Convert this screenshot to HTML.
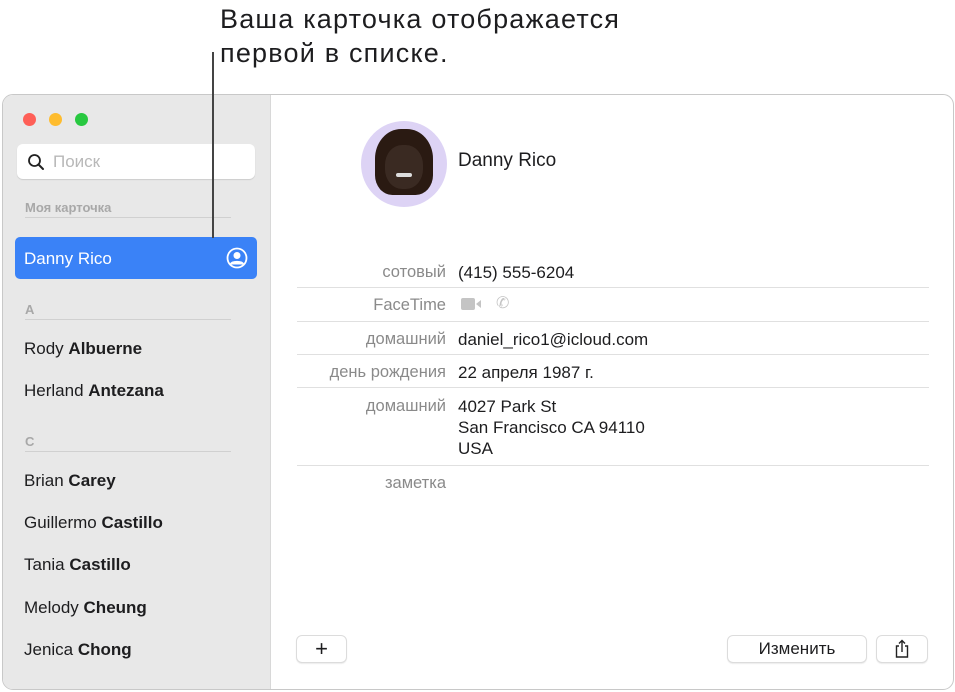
<!DOCTYPE html>
<html><head><meta charset="utf-8"><style>
*{margin:0;padding:0;box-sizing:border-box}
body{width:955px;height:692px;background:#fff;font-family:"Liberation Sans","Noto Sans CJK SC",sans-serif;position:relative;overflow:hidden;color:#1d1d1f}
.a{position:absolute}
.win{left:2px;top:94px;width:952px;height:596px;border:1.5px solid #c8c8c8;border-radius:11px;overflow:hidden;background:#fff}
.side{left:0;top:0;width:268px;height:100%;background:#e8e8e8;border-right:1px solid #d8d8d8}
.dot{width:13px;height:13px;border-radius:50%;top:18px}
.name{left:21px;font-size:17px;color:#1d1d1f}
.name b{font-weight:bold}
.hdr{left:22px;font-size:13px;color:#a8a8a8;font-weight:bold}
.hl{left:22px;width:206px;height:1px;background:#d0d0d0}
.lab{right:507px;font-size:16.5px;color:#8a8a8a;text-align:right;white-space:nowrap}
.val{left:455px;font-size:17px;color:#1d1d1f;line-height:21px}
.sep{left:294px;width:632px;height:1px;background:#e0e0e0}
.btn{background:#fff;border:1px solid #dcdcdc;border-radius:6px;box-shadow:0 1px 1px rgba(0,0,0,.08);top:540px;height:28px;display:flex;align-items:center;justify-content:center;font-size:16px}
</style></head><body>
<div class="a" style="left:220px;top:2px;font-size:27px;letter-spacing:1.2px;line-height:34px;color:#1d1d1f">Ваша карточка отображается<br>первой в списке.</div>
<div class="win a">
 <div class="side a">
  <div class="a dot" style="left:20px;background:#fe5f57"></div>
  <div class="a dot" style="left:46px;background:#febc2e"></div>
  <div class="a dot" style="left:72px;background:#28c840"></div>
  <div class="a" style="left:14px;top:49px;width:238px;height:35px;background:#fff;border-radius:6px;box-shadow:0 1px 1px rgba(0,0,0,.12)">
   <svg class="a" style="left:10px;top:9px" width="18" height="18" viewBox="0 0 18 18"><circle cx="7.5" cy="7.5" r="5.5" fill="none" stroke="#222" stroke-width="1.8"/><path d="M11.5 11.5L16 16" stroke="#222" stroke-width="2" stroke-linecap="round"/></svg>
   <div class="a" style="left:36px;top:8px;font-size:17px;color:#b8b8b8">Поиск</div>
  </div>
  <div class="a hdr" style="top:105px">Моя карточка</div>
  <div class="a hl" style="top:122px"></div>
  <div class="a" style="left:12px;top:142px;width:242px;height:42px;background:#3a82f7;border-radius:5px">
   <div class="a" style="left:9px;top:12px;font-size:17px;color:#fff">Danny Rico</div>
   <svg class="a" style="left:211px;top:10px" width="22" height="22" viewBox="0 0 22 22"><circle cx="11" cy="11" r="9.5" fill="none" stroke="#fff" stroke-width="1.8"/><circle cx="11" cy="8.5" r="3.5" fill="#fff"/><path d="M4.5 17.5C6 14 16 14 17.5 17.5" fill="#fff" stroke="#fff" stroke-width="2"/></svg>
  </div>
  <div class="a hdr" style="top:207px">A</div>
  <div class="a hl" style="top:224px"></div>
  <div class="a name" style="top:244px">Rody <b>Albuerne</b></div>
  <div class="a name" style="top:286px">Herland <b>Antezana</b></div>
  <div class="a hdr" style="top:339px">C</div>
  <div class="a hl" style="top:356px"></div>
  <div class="a name" style="top:376px">Brian <b>Carey</b></div>
  <div class="a name" style="top:418px">Guillermo <b>Castillo</b></div>
  <div class="a name" style="top:460px">Tania <b>Castillo</b></div>
  <div class="a name" style="top:503px">Melody <b>Cheung</b></div>
  <div class="a name" style="top:545px">Jenica <b>Chong</b></div>
 </div>
 <div class="a" style="left:358px;top:26px;width:86px;height:86px;border-radius:50%;background:#ddd3f5;overflow:hidden">
  <div class="a" style="left:14px;top:8px;width:58px;height:66px;border-radius:45% 45% 30% 30%;background:#2a1a12"></div>
  <div class="a" style="left:24px;top:24px;width:38px;height:44px;border-radius:45%;background:#3a2a22"></div>
  <div class="a" style="left:35px;top:52px;width:16px;height:4px;border-radius:3px;background:#ddd"></div>
 </div>
 <div class="a" style="left:455px;top:55px;font-size:19px">Danny Rico</div>
 <div class="a lab" style="top:168px">сотовый</div><div class="a val" style="top:167px">(415) 555-6204</div>
 <div class="a sep" style="top:192px"></div>
 <div class="a lab" style="top:201px">FaceTime</div>
 <svg class="a" style="left:457px;top:201px" width="24" height="16" viewBox="0 0 24 16"><rect x="1" y="2" width="14" height="12" rx="2" fill="#c4c4c4"/><path d="M16 8l5-4v8z" fill="#c4c4c4"/></svg>
 <div class="a" style="left:493px;top:198px;font-size:16px;color:#c4c4c4">✆</div>
 <div class="a sep" style="top:226px"></div>
 <div class="a lab" style="top:235px">домашний</div><div class="a val" style="top:234px">daniel_rico1@icloud.com</div>
 <div class="a sep" style="top:259px"></div>
 <div class="a lab" style="top:268px">день рождения</div><div class="a val" style="top:267px">22 апреля 1987 г.</div>
 <div class="a sep" style="top:292px"></div>
 <div class="a lab" style="top:302px">домашний</div><div class="a val" style="top:301px">4027 Park St<br>San Francisco CA 94110<br>USA</div>
 <div class="a sep" style="top:370px"></div>
 <div class="a lab" style="top:379px">заметка</div>
 <div class="a btn" style="left:293px;width:51px;font-size:22px;font-weight:300">+</div>
 <div class="a btn" style="left:724px;width:140px;font-size:17px">Изменить</div>
 <div class="a btn" style="left:873px;width:52px"><svg width="16" height="20" viewBox="0 0 16 20"><path d="M5 7H2.5v11h11V7H11M8 13V1.5M5 4.5L8 1.5 11 4.5" fill="none" stroke="#222" stroke-width="1.4"/></svg></div>
</div>
<div class="a" style="left:212px;top:52px;width:2px;height:186px;background:#444"></div>
</body></html>
